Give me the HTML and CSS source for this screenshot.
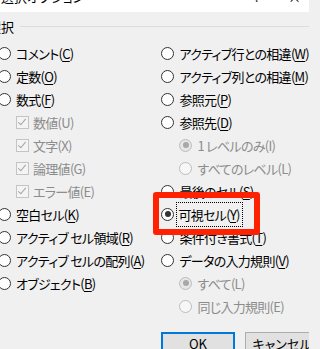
FILE: index.html
```html
<!DOCTYPE html>
<html lang="ja">
<head>
<meta charset="utf-8">
<title>選択オプション</title>
<link rel="stylesheet" href="styles.css">
</head>
<body>
<div class="titlebar">
  <span class="title">選択オプション</span>
  <span class="tb-icons"><span class="help">?</span><span class="close">×</span></span>
</div>
<div class="dialog">
  <div class="group-head"><span class="group-label">選択</span><span class="group-line"></span></div>
  <div class="cols">
    <div class="col col-left">
      <div class="row"><span class="radio"></span><span class="lbl">コメント(<u>C</u>)</span></div>
      <div class="row"><span class="radio"></span><span class="lbl">定数(<u>O</u>)</span></div>
      <div class="row"><span class="radio"></span><span class="lbl">数式(<u>F</u>)</span></div>
      <div class="row sub dis"><span class="check"></span><span class="lbl">数値(U)</span></div>
      <div class="row sub dis"><span class="check"></span><span class="lbl">文字(X)</span></div>
      <div class="row sub dis"><span class="check"></span><span class="lbl">論理値(G)</span></div>
      <div class="row sub dis"><span class="check"></span><span class="lbl">エラー値(E)</span></div>
      <div class="row"><span class="radio"></span><span class="lbl">空白セル(<u>K</u>)</span></div>
      <div class="row"><span class="radio"></span><span class="lbl">アクティブ セル領域(<u>R</u>)</span></div>
      <div class="row"><span class="radio"></span><span class="lbl">アクティブ セルの配列(<u>A</u>)</span></div>
      <div class="row"><span class="radio"></span><span class="lbl">オブジェクト(<u>B</u>)</span></div>
    </div>
    <div class="col col-right">
      <div class="row"><span class="radio"></span><span class="lbl">アクティブ行との相違(<u>W</u>)</span></div>
      <div class="row"><span class="radio"></span><span class="lbl">アクティブ列との相違(<u>M</u>)</span></div>
      <div class="row"><span class="radio"></span><span class="lbl">参照元(<u>P</u>)</span></div>
      <div class="row"><span class="radio"></span><span class="lbl">参照先(<u>D</u>)</span></div>
      <div class="row sub2 dis"><span class="radio on"></span><span class="lbl">1 レベルのみ(I)</span></div>
      <div class="row sub2 dis"><span class="radio"></span><span class="lbl">すべてのレベル(L)</span></div>
      <div class="row"><span class="radio"></span><span class="lbl">最後のセル(<u>S</u>)</span></div>
      <div class="row"><span class="radio on"></span><span class="lbl focus">可視セル(<u>Y</u>)</span></div>
      <div class="row"><span class="radio"></span><span class="lbl">条件付き書式(<u>T</u>)</span></div>
      <div class="row"><span class="radio"></span><span class="lbl">データの入力規則(<u>V</u>)</span></div>
      <div class="row sub2 dis"><span class="radio on"></span><span class="lbl">すべて(L)</span></div>
      <div class="row sub2 dis"><span class="radio"></span><span class="lbl">同じ入力規則(E)</span></div>
    </div>
  </div>
  <div class="buttons">
    <button class="btn default">OK</button>
    <button class="btn">キャンセル</button>
  </div>
  <div class="highlight"></div>
</div>
</body>
</html>
```
FILE: styles.css
```css
html, body {
  margin: 0;
  padding: 0;
  overflow: hidden;
  width: 309px;
  height: 349px;
}
body {
  background: #f0f0f0;
  font-family: "Noto Sans CJK JP", "Noto Sans", sans-serif;
  font-size: 13px;
  font-feature-settings: "palt";
  color: #000;
  position: relative;
}
.titlebar {
  height: 12px;
  background: #fff;
  overflow: hidden;
  display: flex;
  justify-content: space-between;
  line-height: 14px;
  font-size: 13px;
}
.title {
  margin-top: -10px;
  margin-left: 1px;
  color: #000;
}
.tb-icons {
  margin-top: -10px;
  display: flex;
  gap: 28px;
  margin-right: 8px;
}
.dialog {
  position: relative;
}
.group-head {
  height: 29.5px;
  display: flex;
  align-items: center;
  margin-left: -12px;
}
.group-label {
  line-height: 16px;
  margin-right: 6px;
}
.group-line {
  flex: 1;
  height: 1px;
  background: #dcdcdc;
}
.cols {
  display: flex;
  margin-left: -2px;
}
.col-left {
  width: 166px;
}
.col {
  display: flex;
  flex-direction: column;
}
.row {
  height: 23px;
  display: flex;
  align-items: center;
  white-space: nowrap;
  letter-spacing: -0.7px;
}
.row.sub {
  padding-left: 18px;
}
.row.sub2 {
  padding-left: 18px;
}
.radio {
  width: 11px;
  height: 11px;
  border: 1px solid #333;
  border-radius: 50%;
  background: #fff;
  margin-right: 5px;
  flex: none;
  position: relative;
}
.radio.on::after {
  content: "";
  position: absolute;
  left: 2.5px;
  top: 2.5px;
  width: 6px;
  height: 6px;
  border-radius: 50%;
  background: #333;
}
.dis .radio {
  border-color: #bcbcbc;
  background: #f7f7f7;
}
.dis .radio.on {
  background: #e6e6e6;
}
.dis .radio.on::after {
  background: #a8a8a8;
}
.check {
  width: 11px;
  height: 11px;
  border: 1px solid #c4c4c4;
  background: #f4f4f4;
  margin-right: 4px;
  flex: none;
  position: relative;
}
.check::after {
  content: "";
  position: absolute;
  left: 3px;
  top: 0px;
  width: 3px;
  height: 7px;
  border-right: 1px solid #a4a4a4;
  border-bottom: 1px solid #a4a4a4;
  transform: rotate(40deg);
}
.dis .lbl {
  color: #8c8c8c;
}
.lbl u {
  text-underline-offset: 2px;
}
.lbl.focus {
  outline: 1px dotted #000;
  outline-offset: 0;
  padding: 2px 2px 2px 1px;
  margin-left: -2px;
}
.buttons {
  display: flex;
  gap: 10px;
  margin-left: 161px;
  margin-top: 14px;
}
.btn {
  flex: none;
  width: 74px;
  height: 24px;
  font: inherit;
  font-size: 13px;
  background: #e1e1e1;
  border: 1px solid #adadad;
  padding: 0;
  color: #000;
}
.btn.default {
  border: 2px solid #0078d7;
}
.highlight {
  position: absolute;
  left: 153px;
  top: 180px;
  width: 95px;
  height: 31px;
  border: 6px solid #ff2200;
  border-radius: 3px;
}
```
